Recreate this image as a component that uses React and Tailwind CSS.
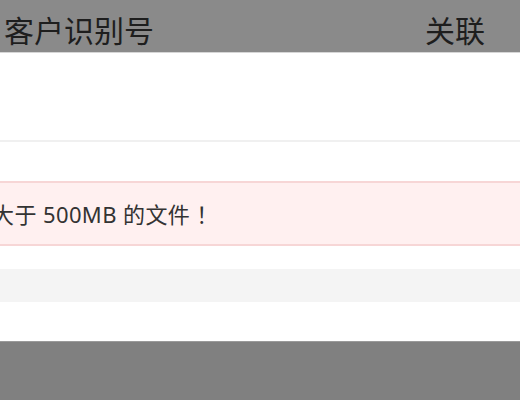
import React from 'react';

const App = () => {
  return (
    <div
      className="w-[520px] h-[400px] overflow-hidden flex flex-col bg-white"
      style={{ fontFamily: '"Noto Sans", "Noto Sans CJK SC", sans-serif' }}
    >
      {/* Header (dimmed by overlay) */}
      <div className="h-[52px] shrink-0 bg-[#8a8a8a] flex items-end justify-between pl-[4px] pr-[35px] pb-[1px] text-[30px] leading-[40px] text-[#1e1e1e]">
        <span>客户识别号</span>
        <span>关联</span>
      </div>
      <div className="h-px shrink-0 bg-[#d6d6d6]" />

      {/* Upload panel */}
      <div className="h-[87px] shrink-0 bg-white" />
      <div className="h-[2px] shrink-0 bg-[#f0f0f0]" />
      <div className="h-[39px] shrink-0 bg-white" />

      {/* Warning */}
      <div className="h-[65px] shrink-0 bg-[#fff0f0] border-y-2 border-[#f7d6d6] flex items-center overflow-hidden">
        <p className="ml-[-8px] pt-[2px] whitespace-nowrap text-[22px] tracking-[0.4px] text-[#333333]">
          大于 500MB 的文件 ！
        </p>
      </div>

      <div className="h-[23px] shrink-0 bg-white" />
      <div className="h-[33px] shrink-0 bg-[#f4f4f4]" />
      <div className="h-[39px] shrink-0 bg-white" />

      {/* Footer (dimmed by overlay) */}
      <div className="flex-1 bg-[#808080] border-t border-[#9a9a9a]" />
    </div>
  );
};

export default App;
